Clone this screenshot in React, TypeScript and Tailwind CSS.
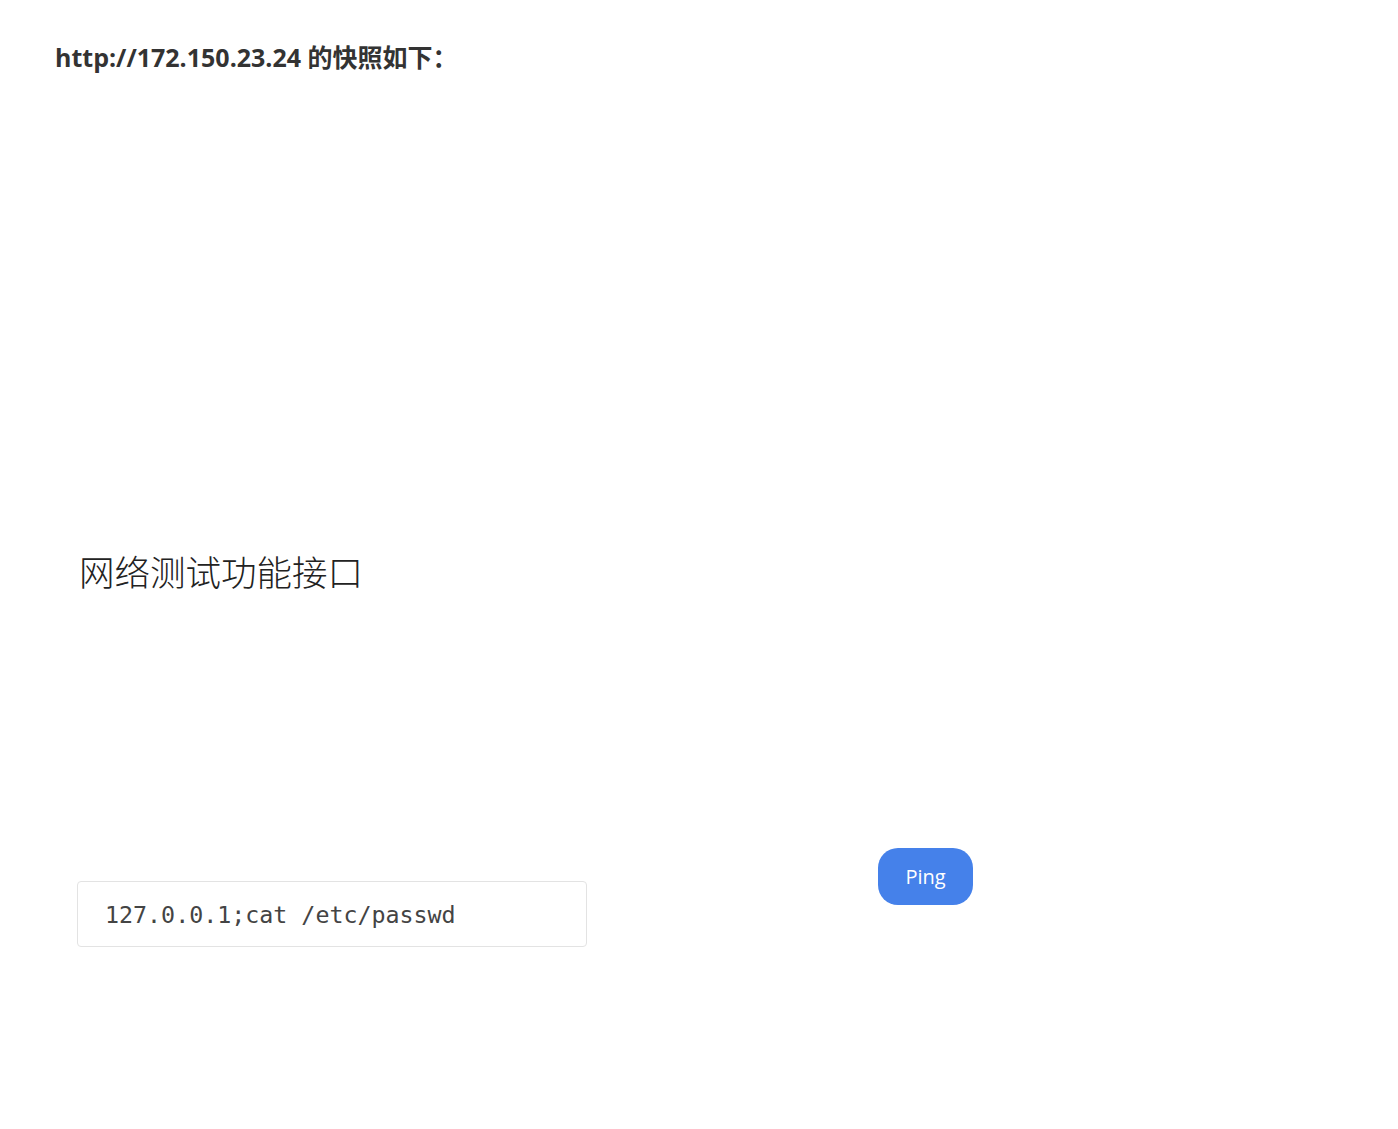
export default function App() {
  return (
    <div className="min-h-[1129px] bg-white font-['Open_Sans','Noto_Sans_CJK_SC',sans-serif] text-[#333]">
      <h1 className="pl-[55px] pt-[40px] text-[25px] leading-[34px] font-bold">
        http://172.150.23.24 的快照如下：
      </h1>

      <h2 className="mt-[475px] pl-[79px] font-['Noto_Sans_CJK_SC',serif] text-[35.5px] leading-[44px] font-light text-[#222]">
        网络测试功能接口
      </h2>

      <div className="mt-[248px] flex items-start pl-[77px]">
        <input
          type="text"
          defaultValue="127.0.0.1;cat /etc/passwd"
          className="mt-[40px] h-[66px] w-[510px] rounded-[4px] border border-[#e3e3e3] px-[27px] font-['DejaVu_Sans_Mono',monospace] text-[23.3px] text-[#444] outline-none"
        />
        <button
          type="button"
          className="ml-[291px] mt-[7px] h-[57px] w-[95px] rounded-[20px] bg-[#4581ea] font-['Open_Sans',sans-serif] text-[20px] text-white"
        >
          Ping
        </button>
      </div>
    </div>
  );
}
